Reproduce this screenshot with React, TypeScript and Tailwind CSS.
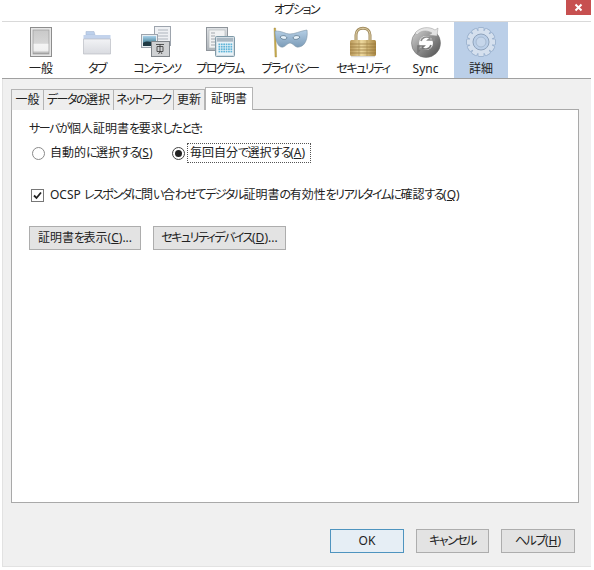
const font = { fontFamily: '"Noto Sans", "Noto Sans CJK JP", sans-serif' };

// kana in the reference's UI font are narrower than in Noto, so tighten only those runs
function J({ t }: { t: string }) {
  return (
    <>
      {t.split(/([\u3040-\u30ff]+)/).map((part, i) =>
        i % 2 === 1 ? (
          <span key={i} className="tracking-[-1.5px]">
            {part}
          </span>
        ) : (
          part
        ),
      )}
    </>
  );
}

function SwitchIcon() {
  return (
    <svg width="32" height="32" viewBox="0 0 32 32">
      <defs>
        <linearGradient id="sw" x1="0" y1="0" x2="0" y2="1">
          <stop offset="0" stopColor="#c9c9c9" />
          <stop offset="0.55" stopColor="#d6d6d6" />
          <stop offset="0.6" stopColor="#f4f4f4" />
          <stop offset="0.85" stopColor="#f0f0f0" />
          <stop offset="1" stopColor="#9a9a9a" />
        </linearGradient>
      </defs>
      <rect x="5.5" y="1.5" width="21" height="29" fill="#e6e6e6" stroke="#8d8d8d" />
      <rect x="8" y="4" width="16" height="24" fill="url(#sw)" stroke="#9b9b9b" strokeWidth="0.7" />
    </svg>
  );
}

function FolderIcon() {
  return (
    <svg width="32" height="32" viewBox="0 0 32 32">
      <defs>
        <linearGradient id="fo" x1="0" y1="0" x2="0" y2="1">
          <stop offset="0" stopColor="#f2f3f6" />
          <stop offset="1" stopColor="#d9dbe0" />
        </linearGradient>
      </defs>
      <path d="M5 9V5.5h8l1 3.5z" fill="#bcd0ec" stroke="#a9bbd3" strokeWidth="0.6" />
      <rect x="2.5" y="9" width="27" height="4" fill="#c3d3ec" />
      <path d="M2.5 13h27v15h-27z" fill="url(#fo)" stroke="#b9bcc3" strokeWidth="0.7" />
    </svg>
  );
}

function ContentIcon() {
  return (
    <svg width="32" height="32" viewBox="0 0 32 32">
      <defs>
        <linearGradient id="ph" x1="0" y1="0" x2="0" y2="1">
          <stop offset="0" stopColor="#a9d1ea" />
          <stop offset="0.55" stopColor="#5c93a8" />
          <stop offset="1" stopColor="#27475a" />
        </linearGradient>
      </defs>
      <rect x="13.5" y="0.5" width="16" height="19" fill="#eef0f3" stroke="#9da4ad" />
      <path d="M17 4h10M17 7h10M17 10h10M17 13h10" stroke="#aeb5bd" />
      <rect x="0.5" y="8.5" width="16" height="13" fill="#e8eef2" stroke="#9da4ad" />
      <rect x="2" y="10" width="13" height="10" fill="url(#ph)" />
      <path d="M2 17c4-3 8-1 13 0v3H2z" fill="#1f3a44" />
      <rect x="10.5" y="15.5" width="18" height="15" fill="#cfd1d3" stroke="#7f8489" />
      <path d="M15 18.5h8M19 18.5v2M16 20.5h6v5h-6zM19 20.5v5M17.5 28l1.5-2.5M21 28l-1.5-2.5" fill="none" stroke="#333" strokeWidth="0.8" />
    </svg>
  );
}

function ProgramIcon() {
  const cells = [];
  for (let r = 0; r < 4; r++) {
    for (let c = 0; c < 6; c++) {
      cells.push(<rect key={`${r}-${c}`} x={14.5 + c * 2.4} y={17.5 + r * 2.4} width="1.7" height="1.7" fill="#5fb4d8" />);
    }
  }
  return (
    <svg width="32" height="32" viewBox="0 0 32 32">
      <defs>
        <linearGradient id="pr" x1="0" y1="0" x2="0" y2="1">
          <stop offset="0" stopColor="#dfe2e5" />
          <stop offset="1" stopColor="#aeb4ba" />
        </linearGradient>
      </defs>
      <rect x="2.5" y="1.5" width="21" height="23" fill="url(#pr)" stroke="#8f959b" />
      <rect x="5" y="4" width="16" height="18" fill="#f1f2f3" stroke="#b0b5ba" strokeWidth="0.6" />
      <path d="M7 7h4M7 10h4M7 13h4M7 16h4M7 19h4" stroke="#a2a7ad" />
      <rect x="11.5" y="10.5" width="19" height="20" rx="1" fill="#d3dde4" stroke="#7f9aa8" />
      <rect x="13" y="12" width="16" height="3.5" fill="#a9b8c3" />
      <rect x="13" y="16" width="16" height="13" fill="#e9f3f8" />
      {cells}
    </svg>
  );
}

function MaskIcon() {
  return (
    <svg width="36" height="32" viewBox="0 0 36 32">
      <defs>
        <linearGradient id="ma" x1="0" y1="0" x2="0" y2="1">
          <stop offset="0" stopColor="#b5cfe6" />
          <stop offset="1" stopColor="#7c9cb8" />
        </linearGradient>
      </defs>
      <path d="M2 2l1.6 0 1 29h-1.6z" fill="#c9ad4e" stroke="#9d8434" strokeWidth="0.4" />
      <path d="M3 5c8 0 10 3 15 3s10-3 17-4c1 7-1 16-8 17-4 1-6-4-9-4s-5 5-9 4C5 20 3 12 3 5z" fill="url(#ma)" stroke="#7d95a8" strokeWidth="0.6" />
      <path d="M8 11c2-2 6-2 7 1-1 2-5 2-7-1zM21 12c1-3 5-3 7-1-2 3-6 3-7 1z" fill="#e8f3fb" stroke="#4d6a80" strokeWidth="0.7" />
    </svg>
  );
}

function LockIcon() {
  return (
    <svg width="32" height="32" viewBox="0 0 32 32">
      <defs>
        <linearGradient id="lo" x1="0" y1="0" x2="1" y2="0">
          <stop offset="0" stopColor="#b9985a" />
          <stop offset="0.45" stopColor="#ecd79c" />
          <stop offset="1" stopColor="#a98743" />
        </linearGradient>
      </defs>
      <path d="M9 15V9c0-9 14-9 14 0v6" fill="none" stroke="#a08a5c" strokeWidth="3" />
      <path d="M9 15V9c0-9 14-9 14 0v6" fill="none" stroke="#e5d6ae" strokeWidth="1" />
      <rect x="3" y="14" width="26" height="16" rx="1.5" fill="url(#lo)" />
      <path d="M3 18h26M3 21h26M3 24h26M3 27h26" stroke="#94733a" strokeWidth="0.7" />
      <path d="M12 14v16M20 14v16" stroke="#a3844a" strokeWidth="0.5" />
      <rect x="4" y="30" width="24" height="1.2" fill="#d8d8d8" />
    </svg>
  );
}

function SyncIcon() {
  return (
    <svg width="32" height="32" viewBox="0 0 32 32">
      <defs>
        <linearGradient id="sy" x1="0" y1="0" x2="1" y2="1">
          <stop offset="0" stopColor="#d8d8d8" />
          <stop offset="0.5" stopColor="#8f8f8f" />
          <stop offset="1" stopColor="#4c4c4c" />
        </linearGradient>
      </defs>
      <circle cx="16" cy="17" r="14.5" fill="url(#sy)" stroke="#6a6a6a" strokeWidth="0.5" />
      <circle cx="16" cy="17" r="7" fill="#fff" />
      <path d="M11 15c1-4 6-5 9-3l-2 2h6v-6l-2 2" fill="none" stroke="#8c8c8c" strokeWidth="1.6" />
      <path d="M21 19c-1 4-6 5-9 3l2-2H8v6l2-2" fill="none" stroke="#777" strokeWidth="1.6" />
      <path d="M5 7c5-6 14-7 20-3l3-2-1 8-8-1 3-2C17 4 11 4 7 9z" fill="#e3e3e3" stroke="#9a9a9a" strokeWidth="0.5" />
    </svg>
  );
}

function GearIcon() {
  const teeth = [0, 30, 60, 90, 120, 150];
  return (
    <svg width="32" height="32" viewBox="0 0 32 32">
      {teeth.map((a) => (
        <rect key={a} x="13" y="1.5" width="6" height="29" rx="1" fill="#d5e0ee" stroke="#8fa8c6" strokeWidth="0.7" transform={`rotate(${a} 16 16)`} />
      ))}
      <circle cx="16" cy="16" r="11.5" fill="#d5e0ee" />
      <circle cx="16" cy="16" r="8" fill="#bbcfe8" stroke="#8fa3bc" strokeWidth="1" />
      <circle cx="16" cy="16" r="5" fill="#c6d6ea" stroke="#a6b9d0" strokeWidth="1" />
    </svg>
  );
}

const tools = [
  { label: '一般', width: 'w-[56px]', icon: <SwitchIcon /> },
  { label: 'タブ', width: 'w-[56px]', icon: <FolderIcon /> },
  { label: 'コンテンツ', width: 'w-[64px]', icon: <ContentIcon /> },
  { label: 'プログラム', width: 'w-[62px]', icon: <ProgramIcon /> },
  { label: 'プライバシー', width: 'w-[78px]', icon: <MaskIcon /> },
  { label: 'セキュリティ', width: 'w-[68px]', icon: <LockIcon /> },
  { label: 'Sync', width: 'w-[57px]', icon: <SyncIcon /> },
  { label: '詳細', width: 'w-[54px]', icon: <GearIcon />, active: true },
];

const tabs = [
  { label: '一般', width: 'w-[33px]' },
  { label: 'データの選択', width: 'w-[71px]' },
  { label: 'ネットワーク', width: 'w-[61px]' },
  { label: '更新', width: 'w-[32px]' },
];

function Key({ k }: { k: string }) {
  return (
    <>
      (<span className="underline">{k}</span>)
    </>
  );
}

function Btn({ width, children, def }: { width: string; children: React.ReactNode; def?: boolean }) {
  return (
    <button
      className={`${width} h-[24px] flex items-center justify-center whitespace-nowrap border text-[12px] text-[#222] ${
        def ? 'border-[#4f94bf] bg-[#e6eef5]' : 'border-[#adadad] bg-[#e3e3e3]'
      }`}
    >
      {children}
    </button>
  );
}

export default function App() {
  return (
    <div style={font} className="w-[594px] h-[570px] bg-white pl-[2px] pr-[3px] pb-[3px] [font-feature-settings:'palt'] text-[#222]">
      <div className="relative h-full flex flex-col">
        <div className="relative h-[21px] shrink-0 flex items-center justify-center text-[12px] pb-[1px]">
          <J t="オプション" />
          <div className="absolute right-0 top-0 w-[25px] h-[15px] bg-[#c75050] flex items-center justify-center">
            <svg width="9" height="9" viewBox="0 0 9 9">
              <path d="M1.5 1.5l6 6M7.5 1.5l-6 6" stroke="#fff" strokeWidth="2" />
            </svg>
          </div>
        </div>

        <div className="h-[58px] shrink-0 border-t border-t-[#d9d9d9] border-b border-b-[#a0a0a0] bg-white flex pl-[11px]">
          {tools.map((t) => (
            <div
              key={t.label}
              className={`${t.width} flex flex-col items-center pt-[4px] text-[12px] leading-[16px] ${t.active ? 'bg-[#bbcfe8]' : ''}`}
            >
              <div className="h-[33px] flex items-start justify-center">{t.icon}</div>
              <div className="whitespace-nowrap mt-[2px]">
                <J t={t.label} />
              </div>
            </div>
          ))}
        </div>

        <div className="flex-1 min-h-0 flex flex-col bg-[#f0f0f0] border-l border-l-[#e2e2e2] border-b border-b-[#e2e2e2] pl-[8px] pr-[12px]">
          <div className="h-[30px] shrink-0 flex items-end relative top-[1px] z-10">
            {tabs.map((t) => (
              <div
                key={t.label}
                className={`${t.width} h-[21px] flex items-center justify-center whitespace-nowrap border border-b-0 border-[#b4b4b4] -mr-px bg-[#eeeeee] text-[12px]`}
              >
                <J t={t.label} />
              </div>
            ))}
            <div className="w-[48px] h-[23px] flex items-center justify-center border border-b-0 border-[#b4b4b4] bg-white text-[12px] ml-[1px]">
              証明書
            </div>
          </div>

          <div className="h-[394px] shrink-0 bg-white border border-[#a9a9a9] pl-[17px] pt-[10px] text-[12px]">
            <div className="h-[18px] flex items-center">
              <span>
                <J t="サーバが個人証明書を要求したとき:" />
              </span>
            </div>

            <div className="mt-[5px] h-[20px] flex items-center">
              <span className="w-[13px] h-[13px] ml-[3px] rounded-full border border-[#8a8a8a] bg-white" />
              <span className="ml-[5px] w-[122px] whitespace-nowrap">
                <J t="自動的に選択する" />
                <Key k="S" />
              </span>
              <span className="w-[13px] h-[13px] rounded-full border border-[#444] bg-white flex items-center justify-center">
                <span className="w-[7px] h-[7px] rounded-full bg-[#222]" />
              </span>
              <span className="ml-[2px] w-[124px] h-[20px] px-[2px] flex items-center whitespace-nowrap border border-dotted border-[#555]">
                <span>
                  <J t="毎回自分で選択する" />
                  <Key k="A" />
                </span>
              </span>
            </div>

            <div className="mt-[22px] h-[20px] flex items-center">
              <span className="w-[13px] h-[13px] ml-[2px] border border-[#777] bg-white flex items-center justify-center">
                <svg width="11" height="11" viewBox="0 0 11 11">
                  <path d="M2 5.5l2.5 2.5L9 2.5" fill="none" stroke="#222" strokeWidth="1.8" />
                </svg>
              </span>
              <span className="ml-[6px] whitespace-nowrap">
                <J t="OCSP レスポンダに問い合わせてデジタル証明書の有効性をリアルタイムに確認する" />
                <Key k="Q" />
              </span>
            </div>

            <div className="mt-[21px] flex gap-[12px]">
              <Btn width="w-[112px]">
                <span>
                  <J t="証明書を表示" />
                  <Key k="C" />
                  ...
                </span>
              </Btn>
              <Btn width="w-[133px]">
                <span>
                  <J t="セキュリティデバイス" />
                  <Key k="D" />
                  ...
                </span>
              </Btn>
            </div>
          </div>

          <div className="flex-1 flex items-start justify-end pt-[26px] gap-[12px] mr-[4px]">
            <Btn width="w-[74px]" def>
              OK
            </Btn>
            <Btn width="w-[73px]">
              <J t="キャンセル" />
            </Btn>
            <Btn width="w-[74px]">
              <span>
                <J t="ヘルプ" />
                <Key k="H" />
              </span>
            </Btn>
          </div>
        </div>
      </div>
    </div>
  );
}
